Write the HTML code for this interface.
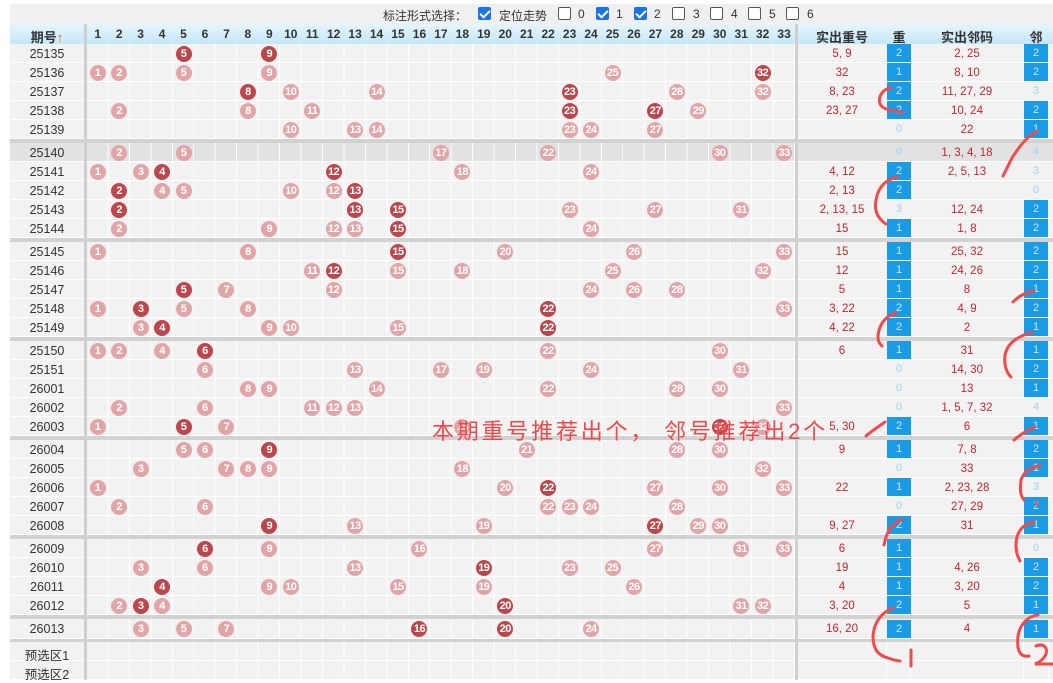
<!DOCTYPE html>
<html><head><meta charset="utf-8"><style>
*{margin:0;padding:0;box-sizing:border-box}
body{width:1053px;height:678px;overflow:hidden;background:#fff;font-family:"Liberation Sans","Noto Sans CJK SC",sans-serif;position:relative}
.top{position:absolute;left:10px;top:4px;width:1043px;height:20px;background:#f0f0f0;font-size:12px;color:#333}
.top span{position:absolute;top:3px}
.cb{position:absolute;top:3px;width:13px;height:13px;border:1px solid #555;border-radius:2px;background:#fff}
.cb.on{background:#1a73e8;border-color:#1a73e8}
.cb.on:after{content:"";position:absolute;left:3px;top:0px;width:4px;height:8px;border:solid #fff;border-width:0 2px 2px 0;transform:rotate(45deg)}
.hd{position:absolute;left:10px;top:24px;width:1043px;height:20px;background:linear-gradient(#e6f5fc,#c4e7f8);font-weight:bold;font-size:12px;color:#333}
.hd span{position:absolute;top:3px;text-align:center}
.r{position:absolute;left:10px;width:1043px;height:19px;background:#f2f2f2;border-bottom:1px solid #fff;font-size:12px}
.r.hl{background:#e2e2e2}
.grid{position:absolute;left:77px;top:0;width:708px;height:19px;background:repeating-linear-gradient(90deg,transparent 0,transparent 20.45px,#fff 20.45px,#fff 21.45px)}
.p{position:absolute;left:0;width:74px;text-align:center;top:3px;color:#333;font-size:12.5px}
.vs{position:absolute;top:0;height:19px;width:3px;background:#cfcfcf}
.b{position:absolute;top:1.5px;width:16px;height:16px;border-radius:50%;color:#fff;font-weight:bold;font-size:11px;line-height:16px;text-align:center;left:calc(77px + (var(--n) - 0.5) * 21.45px - 8px);letter-spacing:-0.5px}
.d{background:#bb464b}.l{background:#e2a5a7}
.c1,.c3{position:absolute;top:4px;text-align:center;color:#c0272d;font-size:11.5px}
.c1{left:788px;width:88px}.c3{left:901px;width:112px}
.c2,.c4{position:absolute;top:0;height:18px;width:24px;text-align:center;line-height:18px;font-size:11px;color:#9dd3f3}
.c2{left:877px}.c4{left:1014px}
.bl{background:#1a9be6;color:#cfe9fb}
.w{position:absolute;top:0;width:1px;height:19px;background:#fff}
.sep{position:absolute;left:10px;width:1043px;height:4px;background:#d2d2d2}
</style></head><body>
<div class="top">
<span style="left:373px">标注形式选择：</span>
<div class="cb on" style="left:468px"></div><span style="left:489px">定位走势</span>
<div class="cb" style="left:548px"></div><span style="left:568px">0</span>
<div class="cb on" style="left:586px"></div><span style="left:606px">1</span>
<div class="cb on" style="left:624px"></div><span style="left:644px">2</span>
<div class="cb" style="left:662px"></div><span style="left:683px">3</span>
<div class="cb" style="left:700px"></div><span style="left:721px">4</span>
<div class="cb" style="left:738px"></div><span style="left:759px">5</span>
<div class="cb" style="left:776px"></div><span style="left:797px">6</span>
</div>
<div class="hd">
<span style="left:0;width:74px;font-size:13px">期号<b style="color:#f06a0f">↑</b></span>
<div class="vs" style="left:74px;height:20px"></div>
<span style="left:77px;width:21.45px">1</span><span style="left:98.45px;width:21.45px">2</span><span style="left:119.9px;width:21.45px">3</span><span style="left:141.35px;width:21.45px">4</span><span style="left:162.8px;width:21.45px">5</span><span style="left:184.25px;width:21.45px">6</span><span style="left:205.7px;width:21.45px">7</span><span style="left:227.15px;width:21.45px">8</span><span style="left:248.6px;width:21.45px">9</span><span style="left:270.05px;width:21.45px">10</span><span style="left:291.5px;width:21.45px">11</span><span style="left:312.95px;width:21.45px">12</span><span style="left:334.4px;width:21.45px">13</span><span style="left:355.85px;width:21.45px">14</span><span style="left:377.3px;width:21.45px">15</span><span style="left:398.75px;width:21.45px">16</span><span style="left:420.2px;width:21.45px">17</span><span style="left:441.65px;width:21.45px">18</span><span style="left:463.1px;width:21.45px">19</span><span style="left:484.55px;width:21.45px">20</span><span style="left:506px;width:21.45px">21</span><span style="left:527.45px;width:21.45px">22</span><span style="left:548.9px;width:21.45px">23</span><span style="left:570.35px;width:21.45px">24</span><span style="left:591.8px;width:21.45px">25</span><span style="left:613.25px;width:21.45px">26</span><span style="left:634.7px;width:21.45px">27</span><span style="left:656.15px;width:21.45px">28</span><span style="left:677.6px;width:21.45px">29</span><span style="left:699.05px;width:21.45px">30</span><span style="left:720.5px;width:21.45px">31</span><span style="left:741.95px;width:21.45px">32</span><span style="left:763.4px;width:21.45px">33</span>
<div class="vs" style="left:785px;height:20px"></div>
<span style="left:788px;width:88px;font-size:13px">实出重号</span>
<span style="left:877px;width:24px;font-size:13px">重</span>
<span style="left:901px;width:112px;font-size:13px">实出邻码</span>
<span style="left:1014px;width:24px;font-size:13px">邻</span>
</div>

<div class="r" style="top:44px"><div class="grid"></div><span class="p">25135</span><div class="vs" style="left:74px"></div><div class="vs" style="left:785px"></div><b class="b d" style="--n:5">5</b><b class="b d" style="--n:9">9</b><span class="c1">5, 9</span><span class="c2 bl">2</span><span class="c3">2, 25</span><span class="c4 bl">2</span></div>
<div class="r" style="top:63px"><div class="grid"></div><span class="p">25136</span><div class="vs" style="left:74px"></div><div class="vs" style="left:785px"></div><b class="b l" style="--n:1">1</b><b class="b l" style="--n:2">2</b><b class="b l" style="--n:5">5</b><b class="b l" style="--n:9">9</b><b class="b l" style="--n:25">25</b><b class="b d" style="--n:32">32</b><span class="c1">32</span><span class="c2 bl">1</span><span class="c3">8, 10</span><span class="c4 bl">2</span></div>
<div class="r" style="top:82px"><div class="grid"></div><span class="p">25137</span><div class="vs" style="left:74px"></div><div class="vs" style="left:785px"></div><b class="b d" style="--n:8">8</b><b class="b l" style="--n:10">10</b><b class="b l" style="--n:14">14</b><b class="b d" style="--n:23">23</b><b class="b l" style="--n:28">28</b><b class="b l" style="--n:32">32</b><span class="c1">8, 23</span><span class="c2 bl">2</span><span class="c3">11, 27, 29</span><span class="c4">3</span></div>
<div class="r" style="top:101px"><div class="grid"></div><span class="p">25138</span><div class="vs" style="left:74px"></div><div class="vs" style="left:785px"></div><b class="b l" style="--n:2">2</b><b class="b l" style="--n:8">8</b><b class="b l" style="--n:11">11</b><b class="b d" style="--n:23">23</b><b class="b d" style="--n:27">27</b><b class="b l" style="--n:29">29</b><span class="c1">23, 27</span><span class="c2 bl">2</span><span class="c3">10, 24</span><span class="c4 bl">2</span></div>
<div class="r" style="top:120px"><div class="grid"></div><span class="p">25139</span><div class="vs" style="left:74px"></div><div class="vs" style="left:785px"></div><b class="b l" style="--n:10">10</b><b class="b l" style="--n:13">13</b><b class="b l" style="--n:14">14</b><b class="b l" style="--n:23">23</b><b class="b l" style="--n:24">24</b><b class="b l" style="--n:27">27</b><span class="c1"></span><span class="c2">0</span><span class="c3">22</span><span class="c4 bl">1</span></div>
<div class="sep" style="top:139px"></div>
<div class="r hl" style="top:143px"><div class="grid"></div><span class="p">25140</span><div class="vs" style="left:74px"></div><div class="vs" style="left:785px"></div><b class="b l" style="--n:2">2</b><b class="b l" style="--n:5">5</b><b class="b l" style="--n:17">17</b><b class="b l" style="--n:22">22</b><b class="b l" style="--n:30">30</b><b class="b l" style="--n:33">33</b><span class="c1"></span><span class="c2">0</span><span class="c3">1, 3, 4, 18</span><span class="c4">4</span></div>
<div class="r" style="top:162px"><div class="grid"></div><span class="p">25141</span><div class="vs" style="left:74px"></div><div class="vs" style="left:785px"></div><b class="b l" style="--n:1">1</b><b class="b l" style="--n:3">3</b><b class="b d" style="--n:4">4</b><b class="b d" style="--n:12">12</b><b class="b l" style="--n:18">18</b><b class="b l" style="--n:24">24</b><span class="c1">4, 12</span><span class="c2 bl">2</span><span class="c3">2, 5, 13</span><span class="c4">3</span></div>
<div class="r" style="top:181px"><div class="grid"></div><span class="p">25142</span><div class="vs" style="left:74px"></div><div class="vs" style="left:785px"></div><b class="b d" style="--n:2">2</b><b class="b l" style="--n:4">4</b><b class="b l" style="--n:5">5</b><b class="b l" style="--n:10">10</b><b class="b l" style="--n:12">12</b><b class="b d" style="--n:13">13</b><span class="c1">2, 13</span><span class="c2 bl">2</span><span class="c3"></span><span class="c4">0</span></div>
<div class="r" style="top:200px"><div class="grid"></div><span class="p">25143</span><div class="vs" style="left:74px"></div><div class="vs" style="left:785px"></div><b class="b d" style="--n:2">2</b><b class="b d" style="--n:13">13</b><b class="b d" style="--n:15">15</b><b class="b l" style="--n:23">23</b><b class="b l" style="--n:27">27</b><b class="b l" style="--n:31">31</b><span class="c1">2, 13, 15</span><span class="c2">3</span><span class="c3">12, 24</span><span class="c4 bl">2</span></div>
<div class="r" style="top:219px"><div class="grid"></div><span class="p">25144</span><div class="vs" style="left:74px"></div><div class="vs" style="left:785px"></div><b class="b l" style="--n:2">2</b><b class="b l" style="--n:9">9</b><b class="b l" style="--n:12">12</b><b class="b l" style="--n:13">13</b><b class="b d" style="--n:15">15</b><b class="b l" style="--n:24">24</b><span class="c1">15</span><span class="c2 bl">1</span><span class="c3">1, 8</span><span class="c4 bl">2</span></div>
<div class="sep" style="top:238px"></div>
<div class="r" style="top:242px"><div class="grid"></div><span class="p">25145</span><div class="vs" style="left:74px"></div><div class="vs" style="left:785px"></div><b class="b l" style="--n:1">1</b><b class="b l" style="--n:8">8</b><b class="b d" style="--n:15">15</b><b class="b l" style="--n:20">20</b><b class="b l" style="--n:26">26</b><b class="b l" style="--n:33">33</b><span class="c1">15</span><span class="c2 bl">1</span><span class="c3">25, 32</span><span class="c4 bl">2</span></div>
<div class="r" style="top:261px"><div class="grid"></div><span class="p">25146</span><div class="vs" style="left:74px"></div><div class="vs" style="left:785px"></div><b class="b l" style="--n:11">11</b><b class="b d" style="--n:12">12</b><b class="b l" style="--n:15">15</b><b class="b l" style="--n:18">18</b><b class="b l" style="--n:25">25</b><b class="b l" style="--n:32">32</b><span class="c1">12</span><span class="c2 bl">1</span><span class="c3">24, 26</span><span class="c4 bl">2</span></div>
<div class="r" style="top:280px"><div class="grid"></div><span class="p">25147</span><div class="vs" style="left:74px"></div><div class="vs" style="left:785px"></div><b class="b d" style="--n:5">5</b><b class="b l" style="--n:7">7</b><b class="b l" style="--n:12">12</b><b class="b l" style="--n:24">24</b><b class="b l" style="--n:26">26</b><b class="b l" style="--n:28">28</b><span class="c1">5</span><span class="c2 bl">1</span><span class="c3">8</span><span class="c4 bl">1</span></div>
<div class="r" style="top:299px"><div class="grid"></div><span class="p">25148</span><div class="vs" style="left:74px"></div><div class="vs" style="left:785px"></div><b class="b l" style="--n:1">1</b><b class="b d" style="--n:3">3</b><b class="b l" style="--n:5">5</b><b class="b l" style="--n:8">8</b><b class="b d" style="--n:22">22</b><b class="b l" style="--n:33">33</b><span class="c1">3, 22</span><span class="c2 bl">2</span><span class="c3">4, 9</span><span class="c4 bl">2</span></div>
<div class="r" style="top:318px"><div class="grid"></div><span class="p">25149</span><div class="vs" style="left:74px"></div><div class="vs" style="left:785px"></div><b class="b l" style="--n:3">3</b><b class="b d" style="--n:4">4</b><b class="b l" style="--n:9">9</b><b class="b l" style="--n:10">10</b><b class="b l" style="--n:15">15</b><b class="b d" style="--n:22">22</b><span class="c1">4, 22</span><span class="c2 bl">2</span><span class="c3">2</span><span class="c4 bl">1</span></div>
<div class="sep" style="top:337px"></div>
<div class="r" style="top:341px"><div class="grid"></div><span class="p">25150</span><div class="vs" style="left:74px"></div><div class="vs" style="left:785px"></div><b class="b l" style="--n:1">1</b><b class="b l" style="--n:2">2</b><b class="b l" style="--n:4">4</b><b class="b d" style="--n:6">6</b><b class="b l" style="--n:22">22</b><b class="b l" style="--n:30">30</b><span class="c1">6</span><span class="c2 bl">1</span><span class="c3">31</span><span class="c4 bl">1</span></div>
<div class="r" style="top:360px"><div class="grid"></div><span class="p">25151</span><div class="vs" style="left:74px"></div><div class="vs" style="left:785px"></div><b class="b l" style="--n:6">6</b><b class="b l" style="--n:13">13</b><b class="b l" style="--n:17">17</b><b class="b l" style="--n:19">19</b><b class="b l" style="--n:24">24</b><b class="b l" style="--n:31">31</b><span class="c1"></span><span class="c2">0</span><span class="c3">14, 30</span><span class="c4 bl">2</span></div>
<div class="r" style="top:379px"><div class="grid"></div><span class="p">26001</span><div class="vs" style="left:74px"></div><div class="vs" style="left:785px"></div><b class="b l" style="--n:8">8</b><b class="b l" style="--n:9">9</b><b class="b l" style="--n:14">14</b><b class="b l" style="--n:22">22</b><b class="b l" style="--n:28">28</b><b class="b l" style="--n:30">30</b><span class="c1"></span><span class="c2">0</span><span class="c3">13</span><span class="c4 bl">1</span></div>
<div class="r" style="top:398px"><div class="grid"></div><span class="p">26002</span><div class="vs" style="left:74px"></div><div class="vs" style="left:785px"></div><b class="b l" style="--n:2">2</b><b class="b l" style="--n:6">6</b><b class="b l" style="--n:11">11</b><b class="b l" style="--n:12">12</b><b class="b l" style="--n:13">13</b><b class="b l" style="--n:33">33</b><span class="c1"></span><span class="c2">0</span><span class="c3">1, 5, 7, 32</span><span class="c4">4</span></div>
<div class="r" style="top:417px"><div class="grid"></div><span class="p">26003</span><div class="vs" style="left:74px"></div><div class="vs" style="left:785px"></div><b class="b l" style="--n:1">1</b><b class="b d" style="--n:5">5</b><b class="b l" style="--n:7">7</b><b class="b l" style="--n:18">18</b><b class="b d" style="--n:30">30</b><b class="b l" style="--n:32">32</b><span class="c1">5, 30</span><span class="c2 bl">2</span><span class="c3">6</span><span class="c4 bl">1</span></div>
<div class="sep" style="top:436px"></div>
<div class="r" style="top:440px"><div class="grid"></div><span class="p">26004</span><div class="vs" style="left:74px"></div><div class="vs" style="left:785px"></div><b class="b l" style="--n:5">5</b><b class="b l" style="--n:6">6</b><b class="b d" style="--n:9">9</b><b class="b l" style="--n:21">21</b><b class="b l" style="--n:28">28</b><b class="b l" style="--n:30">30</b><span class="c1">9</span><span class="c2 bl">1</span><span class="c3">7, 8</span><span class="c4 bl">2</span></div>
<div class="r" style="top:459px"><div class="grid"></div><span class="p">26005</span><div class="vs" style="left:74px"></div><div class="vs" style="left:785px"></div><b class="b l" style="--n:3">3</b><b class="b l" style="--n:7">7</b><b class="b l" style="--n:8">8</b><b class="b l" style="--n:9">9</b><b class="b l" style="--n:18">18</b><b class="b l" style="--n:32">32</b><span class="c1"></span><span class="c2">0</span><span class="c3">33</span><span class="c4 bl">1</span></div>
<div class="r" style="top:478px"><div class="grid"></div><span class="p">26006</span><div class="vs" style="left:74px"></div><div class="vs" style="left:785px"></div><b class="b l" style="--n:1">1</b><b class="b l" style="--n:20">20</b><b class="b d" style="--n:22">22</b><b class="b l" style="--n:27">27</b><b class="b l" style="--n:30">30</b><b class="b l" style="--n:33">33</b><span class="c1">22</span><span class="c2 bl">1</span><span class="c3">2, 23, 28</span><span class="c4">3</span></div>
<div class="r" style="top:497px"><div class="grid"></div><span class="p">26007</span><div class="vs" style="left:74px"></div><div class="vs" style="left:785px"></div><b class="b l" style="--n:2">2</b><b class="b l" style="--n:6">6</b><b class="b l" style="--n:22">22</b><b class="b l" style="--n:23">23</b><b class="b l" style="--n:24">24</b><b class="b l" style="--n:28">28</b><span class="c1"></span><span class="c2">0</span><span class="c3">27, 29</span><span class="c4 bl">2</span></div>
<div class="r" style="top:516px"><div class="grid"></div><span class="p">26008</span><div class="vs" style="left:74px"></div><div class="vs" style="left:785px"></div><b class="b d" style="--n:9">9</b><b class="b l" style="--n:13">13</b><b class="b l" style="--n:19">19</b><b class="b d" style="--n:27">27</b><b class="b l" style="--n:29">29</b><b class="b l" style="--n:30">30</b><span class="c1">9, 27</span><span class="c2 bl">2</span><span class="c3">31</span><span class="c4 bl">1</span></div>
<div class="sep" style="top:535px"></div>
<div class="r" style="top:539px"><div class="grid"></div><span class="p">26009</span><div class="vs" style="left:74px"></div><div class="vs" style="left:785px"></div><b class="b d" style="--n:6">6</b><b class="b l" style="--n:9">9</b><b class="b l" style="--n:16">16</b><b class="b l" style="--n:27">27</b><b class="b l" style="--n:31">31</b><b class="b l" style="--n:33">33</b><span class="c1">6</span><span class="c2 bl">1</span><span class="c3"></span><span class="c4">0</span></div>
<div class="r" style="top:558px"><div class="grid"></div><span class="p">26010</span><div class="vs" style="left:74px"></div><div class="vs" style="left:785px"></div><b class="b l" style="--n:3">3</b><b class="b l" style="--n:6">6</b><b class="b l" style="--n:13">13</b><b class="b d" style="--n:19">19</b><b class="b l" style="--n:23">23</b><b class="b l" style="--n:25">25</b><span class="c1">19</span><span class="c2 bl">1</span><span class="c3">4, 26</span><span class="c4 bl">2</span></div>
<div class="r" style="top:577px"><div class="grid"></div><span class="p">26011</span><div class="vs" style="left:74px"></div><div class="vs" style="left:785px"></div><b class="b d" style="--n:4">4</b><b class="b l" style="--n:9">9</b><b class="b l" style="--n:10">10</b><b class="b l" style="--n:15">15</b><b class="b l" style="--n:19">19</b><b class="b l" style="--n:26">26</b><span class="c1">4</span><span class="c2 bl">1</span><span class="c3">3, 20</span><span class="c4 bl">2</span></div>
<div class="r" style="top:596px"><div class="grid"></div><span class="p">26012</span><div class="vs" style="left:74px"></div><div class="vs" style="left:785px"></div><b class="b l" style="--n:2">2</b><b class="b d" style="--n:3">3</b><b class="b l" style="--n:4">4</b><b class="b d" style="--n:20">20</b><b class="b l" style="--n:31">31</b><b class="b l" style="--n:32">32</b><span class="c1">3, 20</span><span class="c2 bl">2</span><span class="c3">5</span><span class="c4 bl">1</span></div>
<div class="sep" style="top:615px"></div>
<div class="r" style="top:619px;height:20px"><div class="grid"></div><span class="p" style="top:3px">26013</span><div class="vs" style="left:74px;height:20px"></div><div class="vs" style="left:785px;height:20px"></div><b class="b l" style="--n:3">3</b><b class="b l" style="--n:5">5</b><b class="b l" style="--n:7">7</b><b class="b d" style="--n:16">16</b><b class="b d" style="--n:20">20</b><b class="b l" style="--n:24">24</b><span class="c1">16, 20</span><span class="c2 bl" style="top:1px">2</span><span class="c3">4</span><span class="c4 bl" style="top:1px">1</span></div>
<div class="sep" style="top:639px;height:3px"></div>
<div class="r" style="top:642px"><div class="grid"></div><span class="p">预选区1</span><div class="vs" style="left:74px"></div><div class="vs" style="left:785px"></div><div class="w" style="left:876px"></div><div class="w" style="left:900px"></div><div class="w" style="left:1013px"></div><div class="w" style="left:1038px"></div></div>
<div class="r" style="top:661px"><div class="grid"></div><span class="p">预选区2</span><div class="vs" style="left:74px"></div><div class="vs" style="left:785px"></div><div class="w" style="left:876px"></div><div class="w" style="left:900px"></div><div class="w" style="left:1013px"></div><div class="w" style="left:1038px"></div></div>

<div style="position:absolute;left:432px;top:414px;font-size:22px;letter-spacing:2.8px;color:#f04848;white-space:nowrap;font-family:'Liberation Sans','Noto Sans CJK SC',sans-serif">本期重号推荐出个， 邻号推荐出2个</div>

<svg style="position:absolute;left:0;top:0" width="1053" height="678" fill="none" stroke="#f24a4a" stroke-width="3" stroke-linecap="round">
<path d="M891 88 C882 89 878 97 880 104 C883 110 893 111 903 112"/>
<path d="M1037 131 C1028 136 1020 145 1012 158 C1008 166 1005 172 1003 176"/>
<path d="M897 177 C885 180 878 188 876 200 C874 210 877 218 886 224"/>
<path d="M896 313 C885 316 879 325 878 336 C878 342 880 344 882 346"/>
<path d="M1034 291 C1025 292 1018 297 1013 302"/>
<path d="M1032 332 C1020 336 1008 341 1005 355 C1004 365 1006 372 1011 377"/>
<path d="M885 422 C878 427 870 432 866 436"/>
<path d="M1035 427 C1027 430 1020 435 1014 440"/>
<path d="M1040 466 C1030 466 1024 472 1021 480 C1020 490 1020 495 1024 500"/>
<path d="M902 520 C893 522 887 530 884 545"/>
<path d="M1034 522 C1022 524 1016 533 1016 545 C1016 553 1018 557 1020 561"/>
<path d="M1036 503 L1037 504"/>
<path d="M893 608 C882 612 874 622 873 636 C873 648 877 655 888 658 C894 660 898 661 900 661"/>
<path d="M911 650 L911 666"/>
<path d="M1038 615 C1028 616 1020 624 1018 636 C1017 645 1018 652 1022 655 C1026 657 1028 656 1029 656"/>
<path d="M1036 646 C1043 643 1048 647 1046 654 C1044 659 1040 662 1035 664 L1052 664"/>
</svg>
</body></html>
